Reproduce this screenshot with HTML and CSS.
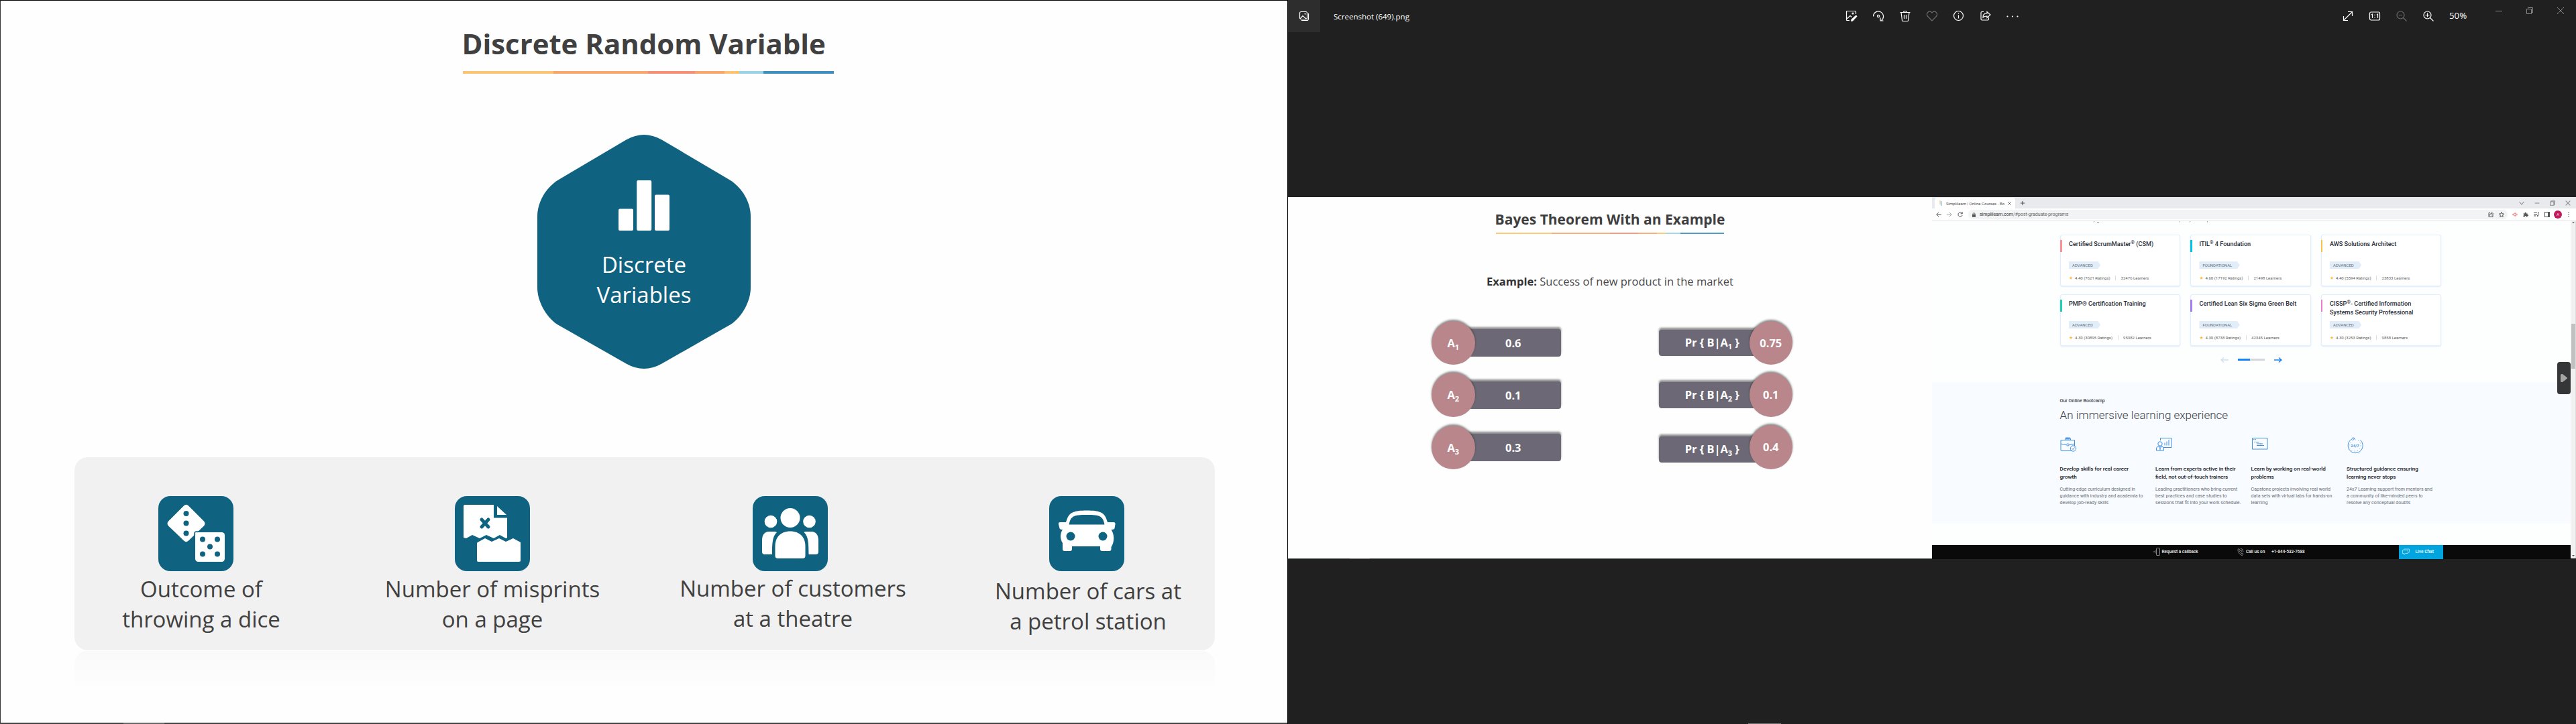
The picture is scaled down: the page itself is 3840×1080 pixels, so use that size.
FILE: index.html
```
<!DOCTYPE html>
<html lang="en">
<head>
<meta charset="utf-8">
<title>Discrete Random Variable</title>
<link rel="stylesheet" href="styles.css">
</head>
<body>
<main class="desktop">
  <section class="slide">
    <header class="slide-head">
      <h1>Discrete Random Variable</h1>
      <div class="rule"></div>
    </header>
    <div class="hex">
      <svg class="hex-shape" viewBox="0 0 318 349" width="318" height="349"><path d="M132.500 7.500Q159-7.500 185.500 7.500L287 67.500C306 79.500 318 101 318 122V228C318 248 306 270.500 289 282.500L185.500 341.500Q159 356.500 132.500 341.500L29 282.500C12 270.500 0 248 0 228V122C0 101 12 79.500 31 67.500Z" fill="#0f6381"/></svg>
      <div class="hex-body">
        <svg viewBox="0 0 76 75" width="76" height="75" fill="#fff"><rect y="42.500" width="22" height="32.500" rx="2"/><rect x="27.200" width="22" height="75" rx="2"/><rect x="54" y="21.500" width="22" height="53.500" rx="2"/></svg>
        <p>Discrete<br>Variables</p>
      </div>
    </div>
    <div class="panel">
      <article class="example example-dice">
        <svg class="tile" viewBox="0 0 112 112">
          <g fill="#fff"><path d="M38 14.500Q41.500 11 45 14.500L68 37.500Q71 41 68 44.500L45 66.500Q41.500 70 38 66.500L15 44.500Q12 41 15 37.500Z"/><rect x="55" y="54" width="44" height="44" rx="4.500"/></g>
          <g fill="#0f6381"><circle cx="41.500" cy="26" r="4"/><circle cx="41.500" cy="40.500" r="4"/><circle cx="41.500" cy="55.500" r="4"/><circle cx="66" cy="64.500" r="4"/><circle cx="88" cy="64.500" r="4"/><circle cx="77" cy="75.500" r="4"/><circle cx="66" cy="86.500" r="4"/><circle cx="88" cy="86.500" r="4"/></g>
          <path d="M54 71V56q0-3 3-3h10" fill="none" stroke="#0f6381" stroke-width="1.600"/>
        </svg>
        <p>Outcome of<br>throwing a dice</p>
      </article>
      <article class="example example-page">
        <svg class="tile" viewBox="0 0 112 112" fill="#fff">
          <path d="M15 13H58V32.500H78V62.500l-2 .5-9-5-9 5-11-5-10 5-11-5-9 5-4-1V15q0-2 2-2Z"/>
          <path d="M63 15 77 28H63Z"/>
          <path d="m34 69 11-6 10 5 11-5 10 5 11-5 11 6V96q0 2-2 2H35q-2 0-2-2V70Z"/>
          <path d="m40 35 10 11M50 35 40 46" stroke="#0f6381" stroke-width="5" stroke-linecap="round"/>
        </svg>
        <p>Number of misprints<br>on a page</p>
      </article>
      <article class="example example-people">
        <svg class="tile" viewBox="0 0 112 112" fill="#fff">
          <circle cx="56" cy="32.500" r="14.500"/><circle cx="27" cy="38" r="9.300"/><circle cx="84.500" cy="38" r="9.300"/>
          <path d="M33.500 89V75C33.500 61 42 52.500 56 52.500S78.500 61 78.500 75V89q0 4-4 4H37.500q-4 0-4-4Z"/>
          <path d="M36 54C30 60 29 68 29 87H18q-4 0-4-4V66C14 58 18 53 24 53h8q3 0 4 1ZM76.500 54C82.500 60 83.500 68 83.500 87H94q4 0 4-4V66C98 58 94 53 88 53h-8q-3 0-3.500 1Z"/>
        </svg>
        <p>Number of customers<br>at a theatre</p>
      </article>
      <article class="example example-car">
        <svg class="tile" viewBox="0 0 112 112">
          <path fill="#fff" d="M25 39C29 25 34 21.500 56 21.500S83 25 87 39h9q3 0 2.500 3l-1 6q-.5 2-5 2c5 8 5 18 0 26V79q0 3-3 3H79q-3 0-3-3V75H34v4q0 3-3 3H23q-3 0-3-3V70c-4-6-4-14 0-20q-4 0-4.500-2l-1.500-6q-.5-3 2-3Z"/>
          <path fill="#0f6381" d="M29.500 42.500C32 30 36 28 56 28s24 2 26.500 14.500Z"/><circle cx="32" cy="60" r="6.500" fill="#0f6381"/><circle cx="80" cy="60" r="6.500" fill="#0f6381"/>
        </svg>
        <p>Number of cars at<br>a petrol station</p>
      </article>
    </div>
    <div class="reflection"></div>
    <div class="progress"><span></span></div>
  </section>

  <section class="viewer">
    <header class="viewer-bar">
      <div class="home"><svg viewBox="0 0 16 16" width="16" height="16"><g fill="none" stroke="#fff" stroke-width="1.200"><rect x="1.500" y="1.500" width="11" height="11" rx="2"/><path d="M14.500 4v8q0 2.500-2.500 2.500H4M2 12l4-4.500 5.500 5"/></g><circle cx="9.500" cy="4.700" r="1" fill="#fff"/></svg></div>
      <span class="filename">Screenshot (649).png</span>
      <nav class="tools">
        <span><svg viewBox="0 0 18 18"><path d="M6 15.500H2.500q-1 0-1-1V2.500q0-1 1-1h12q1 0 1 1V6M2 13l5-4.500 2.500 2"/><circle cx="11" cy="5" r="1"/><path class="solid" d="m16.500 8 1 1.500-6.500 7-3 .5.500-3 6.500-6Z"/></svg></span>
        <span><svg viewBox="0 0 18 18"><path d="M1.500 9.500a7.500 7.500 0 1 1 12 6M16.500 16h-4.500v-4.500"/><circle cx="9" cy="9" r="1.600"/></svg></span>
        <span><svg viewBox="0 0 18 18"><path d="M1.500 3.500h15M6.500 3.500q0-2 2.500-2t2.500 2M3 3.500l1.500 12q.1 1 1 1h7q.9 0 1-1l1.500-12M7.500 7v6M10.500 7v6"/></svg></span>
        <span class="dim"><svg viewBox="0 0 18 18"><path d="m9 16-6.300-6.500C-1 5 5-1 9 4c4-5 10 1 6.300 5.500Z"/></svg></span>
        <span><svg viewBox="0 0 18 18"><circle cx="8.500" cy="8.500" r="7"/><path d="M8.500 7.500v5M8.500 4.500v1.200"/></svg></span>
        <span><svg viewBox="0 0 18 18"><path d="M6 2.500H3.500q-1.500 0-1.500 1.500v9.500q0 1.500 1.500 1.500H12q1.500 0 1.500-1.500V11"/><path d="M5 11c0-4.500 2-6 6-6V2.500l5 4.500-5 4.500V9c-3 0-4.500.5-6 2Z"/></svg></span>
        <span><svg viewBox="0 0 18 18"><g class="solid"><circle cx="1.500" cy="9.500" r="1.100"/><circle cx="9" cy="9.500" r="1.100"/><circle cx="16.500" cy="9.500" r="1.100"/></g></svg></span>
      </nav>
      <nav class="tools tools-zoom">
        <span><svg viewBox="0 0 18 18"><path d="m2.500 15.500 13-13M9 2.500h6.500V9M2.500 9v6.500H9"/></svg></span>
        <span><svg viewBox="0 0 18 18"><rect x="1.500" y="3" width="15" height="12" rx="2"/><path d="M4 7l1.500-1v6M12 7l1.500-1v6M9 6.800v1.200M9 10.300v1.200"/></svg></span>
        <span class="dim"><svg viewBox="0 0 18 18"><circle cx="7.500" cy="7.500" r="5.500"/><path d="m11.500 11.500 5 5M5 7.500h5"/></svg></span>
        <span><svg viewBox="0 0 18 18"><circle cx="7.500" cy="7.500" r="5.500"/><path d="m11.500 11.500 5 5M4.500 7.500h6M7.500 4.500v6"/></svg></span>
      </nav>
      <span class="zoom-level">50%</span>
      <nav class="window-buttons">
        <span><svg viewBox="0 0 10 10"><path d="M0 5.500h10"/></svg></span>
        <span><svg viewBox="0 0 10 10"><path d="M.5 2.500h7v7h-7ZM2.500 2.500v-2h7v7h-2"/></svg></span>
        <span><svg viewBox="0 0 10 10"><path d="m0 0 10 10M10 0 0 10"/></svg></span>
      </nav>
    </header>

    <div class="photo">
      <section class="bayes">
        <h2>Bayes Theorem With an Example</h2>
        <div class="rule"></div>
        <p class="lead"><b>Example:</b> Success of new product in the market</p>
        <div class="pills">
          <div class="col">
            <div class="pill"><span class="disc">A<sub>1</sub></span><span class="bar">0.6</span></div>
            <div class="pill"><span class="disc">A<sub>2</sub></span><span class="bar">0.1</span></div>
            <div class="pill pill-last"><span class="disc">A<sub>3</sub></span><span class="bar">0.3</span></div>
          </div>
          <div class="col col-right">
            <div class="pill"><span class="bar">Pr { B|A<sub>1</sub> }</span><span class="disc">0.75</span></div>
            <div class="pill"><span class="bar">Pr { B|A<sub>2</sub> }</span><span class="disc">0.1</span></div>
            <div class="pill pill-last"><span class="bar">Pr { B|A<sub>3</sub> }</span><span class="disc">0.4</span></div>
          </div>
        </div>
      </section>

      <section class="browser">
        <div class="tabstrip">
          <div class="tab"><svg class="favicon" viewBox="0 0 4 8" width="4" height="8"><path d="M1 0v6" stroke="#f4b860"/><path d="M3 1v7" stroke="#5db4e0"/></svg><span>Simplilearn | Online Courses - Bo</span><svg viewBox="0 0 6 6" width="5" height="5"><path d="m0.500.5 5 5m0-5-5 5" stroke="#444"/></svg></div>
          <svg class="plus" viewBox="0 0 6 6" width="6" height="6"><path d="M3 0v6M0 3h6" stroke="#444"/></svg>
          <div class="chrome-window">
            <svg viewBox="0 0 6 6"><path d="m.5 1.500 2.500 3 2.500-3"/></svg>
            <svg viewBox="0 0 6 6"><path d="M.5 3h5"/></svg>
            <svg viewBox="0 0 6 6"><path d="M.5 1.500h4v4h-4ZM1.500 1.500v-1h4v4h-1"/></svg>
            <svg viewBox="0 0 6 6"><path d="m.5.5 5 5m0-5-5 5"/></svg>
          </div>
        </div>
        <div class="toolbar">
          <span><svg viewBox="0 0 8 8"><path d="M8 4H.8M4 .8.8 4 4 7.200"/></svg></span>
          <span class="faded"><svg viewBox="0 0 8 8"><path d="M0 4h7.200M4 .8 7.200 4 4 7.200"/></svg></span>
          <span><svg viewBox="0 0 8 8"><path d="M7 2.500A3.200 3.200 0 1 0 7.200 5M7.200.3v2.500H4.700"/></svg></span>
          <div class="omnibox">
            <svg viewBox="0 0 6 8" width="5" height="7"><rect y="3" width="6" height="5" fill="#555"/><path d="M1.300 3V2q0-1.500 1.700-1.500T4.700 2v1" fill="none" stroke="#555"/></svg>
            <p>simplilearn.com<i>/#post-graduate-programs</i></p>
            <span><svg viewBox="0 0 8 8"><path d="M3 1.500H1v6h6V5M2.500 5.500c0-2.500 1-3 3-3V1L8 3.200 5.500 5V4"/></svg></span>
            <span><svg viewBox="0 0 8 8"><path d="m4 .5 1 2.300 2.600.3-1.900 1.700.5 2.600L4 6.100 1.800 7.400l.5-2.600L.4 3.100 3 2.800Z"/></svg></span>
          </div>
          <span class="red"><svg viewBox="0 0 8 8"><path d="M2 4q0-2 2-2h1.500v4H4Q2 6 2 4ZM0 4h2M5.500 4H8"/></svg></span>
          <span><svg viewBox="0 0 8 8"><path class="fill" d="M.5 2.500H2.500V2a1.200 1.200 0 0 1 2.400 0v.5H6.500V4H7a1.100 1.100 0 0 1 0 2.200h-.5V7.500H4.700V7a1 1 0 0 0-2 0v.5H.5V5.500H1a.9.9 0 0 0 0-1.800H.5Z"/></svg></span>
          <span><svg viewBox="0 0 8 8"><path d="M0 1h5M0 3.500h5M0 6h3M6.500 1v5M6.500 1H8"/><circle class="fill" cx="5.700" cy="6" r="1"/></svg></span>
          <span><svg viewBox="0 0 8 8"><rect x=".5" y=".5" width="7" height="7"/><path class="fill" d="M5 0h3v8H5Z"/></svg></span>
          <b class="avatar">A</b>
          <span><svg viewBox="0 0 8 8"><g class="fill"><circle cx="4" cy="1" r=".8"/><circle cx="4" cy="4" r=".8"/><circle cx="4" cy="7" r=".8"/></g></svg></span>
        </div>
        <div class="viewport">
          <div class="page">
            <svg class="descenders" viewBox="0 0 952 2" width="952" height="2"><path d="m242 0-1 1.500M246 1.500h3M369.500 0v1.500M385 0l-1 1.500M410.500 0v1.500"/></svg>
            <div class="cards">
              <article class="card red-mark"><h3>Certified ScrumMaster<sup>®</sup> (CSM)</h3><span class="badge">ADVANCED</span><p><i>★</i>4.40 (7621 Ratings)<em>32476 Learners</em></p></article>
              <article class="card cyan-mark"><h3>ITIL<sup>®</sup> 4 Foundation</h3><span class="badge">FOUNDATIONAL</span><p><i>★</i>4.60 (17192 Ratings)<em>21498 Learners</em></p></article>
              <article class="card amber-mark"><h3>AWS Solutions Architect</h3><span class="badge">ADVANCED</span><p><i>★</i>4.40 (5594 Ratings)<em>23833 Learners</em></p></article>
              <article class="card teal-mark"><h3>PMP® Certification Training</h3><span class="badge">ADVANCED</span><p><i>★</i>4.30 (30895 Ratings)<em>95382 Learners</em></p></article>
              <article class="card violet-mark"><h3>Certified Lean Six Sigma Green Belt</h3><span class="badge">FOUNDATIONAL</span><p><i>★</i>4.30 (8738 Ratings)<em>42345 Learners</em></p></article>
              <article class="card pink-mark"><h3>CISSP<sup>®</sup>- Certified Information<br>Systems Security Professional</h3><span class="badge">ADVANCED</span><p><i>★</i>4.30 (3253 Ratings)<em>9858 Learners</em></p></article>
            </div>
            <div class="pager">
              <svg viewBox="0 0 12 10" width="12" height="10"><path d="M12 5H1M5 1.500 1 5l4 3.500" stroke="#cfdff0"/></svg>
              <div class="track"><span></span></div>
              <svg viewBox="0 0 12 10" width="12" height="10"><path d="M0 5h11M7 1.500 11 5 7 8.500" stroke="#1a82f7"/></svg>
            </div>
            <section class="bootcamp">
              <h4>Our Online Bootcamp</h4>
              <h2>An immersive learning experience</h2>
              <div class="features">
                <article>
                  <svg viewBox="0 0 25 25"><path d="M17 20.500H2q-1 0-1-1V4.500h20.500V14M1 10l8.500 1.800M13.500 11.800 21.500 10M7.500 4V2.500q0-1.500 1.500-1.500h5q1.500 0 1.500 1.500V4"/><path d="M8.500 2.500h6" stroke-width="2"/><circle cx="11.500" cy="11.500" r="1.700"/><circle cx="19.500" cy="17" r="4.200"/><path d="m17.500 17 1.500 1.500 2.500-3"/></svg>
                  <h5>Develop skills for real career<br>growth</h5><p>Cutting-edge curriculum designed in<br>guidance with industry and academia to<br>develop job-ready skills</p></article>
                <article>
                  <svg viewBox="0 0 25 25"><path d="M7.500 5V1.500h16.500v14H12M14 12.500v-4M17 12.500v-6M20 12.500V4"/><circle cx="7" cy="10" r="3.200"/><path d="M1.500 20v-3q0-2.500 3-3h5q3 .5 3 3v3ZM5 14l2 3 2-3M7 16v4"/></svg>
                  <h5>Learn from experts active in their<br>field, not out-of-touch trainers</h5><p>Leading practitioners who bring current<br>best practices and case studies to<br>sessions that fit into your work schedule.</p></article>
                <article>
                  <svg viewBox="0 0 25 25"><path d="M1.500 1.500H24v16.500H1.500Z"/><path d="M3 3.700h4" stroke-dasharray="1 .5"/><path d="M5.500 6.500 5 7.500l.500 1M7 7.500h4.500M8 10h7M8 12.500h9M13 10h4M12 12.500h7"/></svg>
                  <h5>Learn by working on real-world<br>problems</h5><p>Capstone projects involving real world<br>data sets with virtual labs for hands-on<br>learning</p></article>
                <article>
                  <svg viewBox="0 0 25 25"><path d="M20.500 4.500a11 11 0 1 1-10-2.500M9 .5l3 1.500-2 2.500"/><circle cx="12.500" cy="12.500" r="8.500" stroke-dasharray=".8 3.650"/><text x="12.500" y="14.600">24/7</text></svg>
                  <h5>Structured guidance ensuring<br>learning never stops</h5><p>24x7 Learning support from mentors and<br>a community of like-minded peers to<br>resolve any conceptual doubts</p></article>
              </div>
            </section>
            <footer class="contact">
              <span class="callback"><svg viewBox="0 0 10 12" width="10" height="12"><rect x="4.500" y=".5" width="5" height="11" rx=".8"/><path d="M2.800 3.500v5M1 5v2"/></svg>Request a callback</span>
              <span class="call"><svg viewBox="0 0 10 12" width="10" height="12"><path d="M1 2.500 2.500 1.500 4.500 4 3.500 5.500 6 8.500 7.500 8l1.500 2-1.500 1.500C4 11 .5 6 1 2.500ZM5 1q3.500.5 4 5M5 3.500q1.500.5 2 2.500"/></svg>Call us on<b>+1-844-532-7688</b></span>
              <span class="chat"><svg viewBox="0 0 11 10" width="11" height="10"><path d="M.5 2.500h8v5H4.500L3 9.500v-2H.5ZM2.500 2.500v-1.500h8v5h-2"/></svg>Live Chat</span>
            </footer>
          </div>
          <div class="scrollbar"><i class="up"></i><span class="thumb"></span><i class="down"></i></div>
          <div class="recorder"><svg viewBox="0 0 10 12" width="10" height="12"><path d="M0 1.500Q0 0 1.500 0H3l7 5.500v1L3 12H1.500Q0 12 0 10.500Z" fill="#a5a5a5"/></svg></div>
        </div>
      </section>
    </div>
    <div class="taskline"><span></span><span></span></div>
    <div class="bottom-edge"><span></span></div>
  </section>
</main>
</body>
</html>
```
FILE: styles.css
```
* { box-sizing: border-box; }
body { margin: 0; background: #202020; overflow: hidden; }
h1, h2, h3, h4, h5, p { margin: 0; font-weight: inherit; }
svg { display: block; flex: none; }
i, em { font-style: normal; }

.desktop { display: flex; width: 3840px; height: 1080px; }

.rule {
  background: linear-gradient(90deg, #fcc470 24.500%, #f8a66c 24.500% 50%, #f78f76 50% 62.500%, #f8a66c 62.500% 70.500%, #fcc470 70.500% 74.500%, #9ad2ea 74.500% 81%, #3d8fc0 81%);
}

/* Left slide */
.slide {
  display: flex; flex-direction: column;
  width: 1920px; height: 1080px;
  background: #fefefe; color: #404040;
  border-top: 1px solid #000; border-left: 1px solid #333; border-right: 1px solid #000;
  font-family: "Open Sans", sans-serif;
}
.slide-head { margin: 39px 0 0 686px; }
.slide-head h1 { padding-left: 1.500px; font-size: 41.900px; line-height: 50px; font-weight: 700; white-space: nowrap; }
.slide-head .rule { width: 553px; height: 4px; margin: 16px 0 0 3px; }

.hex { display: grid; width: 318px; height: 349px; margin: 91px 0 0 800px; }
.hex > * { grid-area: 1 / 1; }
.hex-body { display: flex; flex-direction: column; align-items: center; padding-top: 68px; }
.hex-body p { margin-top: 28px; color: #fff; font-size: 33px; line-height: 45px; text-align: center; }

.panel { display: flex; width: 1700px; height: 288px; margin: 132px 0 0 110px; padding: 58px 0 0 19px; background: #f1f1f1; border-radius: 20px; }
.example { display: flex; flex-direction: column; align-items: center; width: 340px; }
.example p { margin-top: 4px; font-size: 33px; line-height: 45px; text-align: center; white-space: nowrap; }
.tile { width: 112px; height: 112px; background: #0f6381; border-radius: 18px; }
.example-dice .tile { margin-right: 16px; }
.example-page { margin-left: 94px; }
.example-people { margin-left: 108px; }
.example-people .tile { margin-right: 9px; }
.example-people p { margin-top: 3px; }
.example-car { margin-left: 100px; }
.example-car .tile { margin-right: 4px; }
.example-car p { margin-top: 7px; }
.reflection { width: 1700px; height: 60px; margin: 1px 0 0 110px; border-radius: 20px 20px 0 0; background: linear-gradient(#f9f9f9, #fefefe); }
.progress { height: 2px; margin: auto 0 0 -1px; background: #444; padding-left: 184px; }
.progress span { display: block; width: 61px; height: 2px; background: #666; }

/* Photo viewer */
.viewer { display: flex; flex-direction: column; width: 1920px; height: 1080px; background: #202020; }
.viewer-bar { display: flex; height: 48px; color: #fff; font-family: "Open Sans", sans-serif; }
.home { display: flex; align-items: center; justify-content: center; width: 48px; background: #2d2d2d; }
.filename { width: 772px; padding-left: 20px; font-size: 11.500px; line-height: 49px; }
.tools { display: flex; }
.tools span { display: flex; align-items: center; justify-content: center; width: 40px; }
.tools svg { width: 18px; height: 18px; fill: none; stroke: #fff; stroke-width: 1.200; }
.tools .solid { fill: #fff; stroke: none; }
.tools .dim svg { stroke: #6b6b6b; }
.tools-zoom { margin-left: 460px; }
.zoom-level { width: 62px; padding-left: 11px; font-size: 13.300px; line-height: 47px; }
.window-buttons { display: flex; height: 32px; }
.window-buttons span { display: flex; align-items: center; justify-content: center; width: 46px; }
.window-buttons svg { width: 10px; height: 10px; fill: none; stroke: #8a8a8a; stroke-width: 1; }

.photo { display: flex; height: 539px; margin-top: 246px; }

/* Bayes slide */
.bayes { width: 960px; background: #fefefe; color: #3e3e3e; font-family: "Open Sans", sans-serif; }
.bayes h2 { padding-top: 20px; font-size: 21px; line-height: 26px; font-weight: 700; text-align: center; }
.bayes .rule { width: 340px; height: 2px; margin: 7px auto 0; opacity: .9; }
.lead { margin-top: 60px; font-size: 16.500px; line-height: 22px; text-align: center; color: #484848; }
.lead b { color: #333; }
.pills { display: flex; gap: 146px; margin: 47.500px 0 0 214px; color: #fff; font-size: 16.400px; font-weight: 700; }
.pills sub { font-size: 11px; line-height: 0; vertical-align: -4px; }
.col { width: 193px; }
.col-right { width: 199px; }
.pill { display: flex; align-items: center; height: 65.500px; margin-bottom: 12.300px; }
.pill-last { margin-top: 13px; }
.col-right .pill-last { margin-top: 11.300px; }
.disc { position: relative; z-index: 1; width: 64.500px; height: 65.500px; border-radius: 50%; background: #b8868b; box-shadow: 0 -2px 3px rgba(40, 50, 50, .55); line-height: 65px; text-align: center; }
.bar { flex: 1; height: 41px; margin-left: -32px; padding-left: 18px; border-radius: 4px; background: #6d6875; box-shadow: 0 -3px 3px rgba(50, 50, 50, .55); line-height: 41px; text-align: center; }
.col-right .bar { height: 39px; margin: 1px -32px 0 0; padding: 0 8px 0 0; line-height: 38px; }
.col-right .pill-last .bar { margin-top: 8px; }

/* Browser screenshot */
.browser { display: flex; flex-direction: column; width: 960px; background: #fff; font-family: "Roboto", sans-serif; color: #3b3f4a; }
.tabstrip { display: flex; align-items: center; height: 17px; padding: 1px 0 0 4px; background: #e8eaed; }
.tab { display: flex; align-items: center; width: 120px; height: 16px; padding-left: 7px; background: #fff; border-radius: 4px 4px 0 0; font-size: 6.050px; color: #555; }
.tab span { width: 88px; margin: 0 4px 0 6px; white-space: nowrap; }
.plus { margin-left: 8px; }
.chrome-window { display: flex; gap: 15px; margin: -1px 8px 0 auto; }
.chrome-window svg { width: 8px; height: 8px; fill: none; stroke: #8a8a8a; stroke-width: .8; }
.toolbar { display: flex; align-items: center; height: 18px; padding-left: 2px; background: #fff; }
.toolbar span { display: flex; justify-content: center; width: 16px; }
.toolbar span svg { width: 8px; height: 8px; fill: none; stroke: #555; stroke-width: 1; }
.toolbar .fill { fill: #555; stroke: none; }
.toolbar .faded { opacity: .5; }
.toolbar .red svg { stroke: #f0625c; }
.omnibox { display: flex; align-items: center; width: 804px; height: 14px; margin: 0 3px 0 4px; padding: 0 1px 0 6px; border-radius: 7px; background: #f1f3f4; }
.omnibox p { flex: 1; margin-left: 6px; font-size: 7px; color: #333; }
.omnibox i { color: #666; }
.avatar { width: 12px; height: 12px; margin: 0 2px; border-radius: 50%; background: #c2185b; color: #e9a9c2; font-size: 6px; line-height: 12px; text-align: center; }

.viewport { position: relative; display: flex; height: 504px; border-top: 1px solid #dfe1e3; }
.page { width: 952px; background: #fdfefe; }
.descenders { fill: none; stroke: #999; stroke-width: 1; }
.cards { display: grid; grid-template-columns: repeat(3, 179.400px); gap: 12px 15.100px; padding: 17.500px 0 0 191px; }
.card { position: relative; height: 77px; padding: 7px 0 0 12px; border: 1px solid #e1eefb; border-radius: 3px; background: #fff; box-shadow: 0 1px 2px #dcebfa; }
.card::before { content: ""; position: absolute; left: -1px; top: 7px; width: 2.500px; height: 18px; background: var(--mark); }
.red-mark { --mark: #ff8f92; }
.cyan-mark { --mark: #00c3e6; }
.amber-mark { --mark: #f5c342; }
.teal-mark { --mark: #1cd3b4; }
.violet-mark { --mark: #a47df2; }
.pink-mark { --mark: #f07cc8; }
.card h3 { height: 32.500px; font-size: 9.150px; line-height: 13px; font-weight: 500; color: #272c37; white-space: nowrap; }
.card sup { font-size: 7px; line-height: 0; vertical-align: 3px; }
.badge { display: block; width: fit-content; height: 11px; padding: 0 11.500px 0 5px; background: #e1edf9; clip-path: polygon(0 0, calc(100% - 4px) 0, 100% 50%, calc(100% - 4px) 100%, 0 100%); font-size: 6px; line-height: 11px; color: #66707c; }
.card p { display: flex; align-items: center; height: 9px; margin-top: 9px; font-size: 6.020px; color: #5c5c5c; white-space: nowrap; }
.card p i { width: 9px; color: #fbb83c; font: 7px "DejaVu Sans", sans-serif; }
.card em { margin-left: 7.500px; padding-left: 7.500px; border-left: 1px solid #ddd; }
.pager { display: flex; align-items: center; gap: 14px; height: 10px; margin: 16px 0 0 430px; }
.pager path { fill: none; stroke-width: 1.300; }
.track { width: 40px; height: 2.500px; background: #d4d7db; }
.track span { display: block; width: 18px; height: 2.500px; background: #1a82f7; }

.bootcamp { height: 211px; margin-top: 28px; padding: 23px 0 0 190.600px; background: #f8fbff; }
.bootcamp h4 { font-size: 7.050px; line-height: 10px; font-weight: 500; color: #3a3e46; }
.bootcamp h2 { margin-top: 5px; font-size: 17.050px; line-height: 22px; font-weight: 300; color: #3a3f47; }
.features { display: flex; margin-top: 22px; }
.features article { width: 142.500px; white-space: nowrap; }
.features svg { width: 25px; height: 25px; margin-bottom: 16px; fill: none; stroke: #3f8fe0; stroke-width: 1; }
.features text { fill: #3f8fe0; stroke: none; font-size: 6px; font-weight: 700; text-anchor: middle; }
.features h5 { font-size: 8.100px; line-height: 12px; font-weight: 500; color: #15181d; }
.features p { margin-top: 8px; font-size: 7.020px; line-height: 10px; color: #666d75; }

.contact { display: flex; align-items: center; height: 21px; margin-top: 32px; padding-left: 330px; background: #0a0a0a; color: #f0f0f0; font-size: 6.450px; font-weight: 500; }
.contact svg { fill: none; stroke: #bbb; stroke-width: .7; }
.contact span { display: flex; align-items: center; white-space: nowrap; }
.callback { width: 125px; gap: 2.500px; }
.call { width: 241px; gap: 3px; }
.call b { margin-left: 7px; font-size: 6.300px; font-weight: 500; }
.contact .chat { width: 66px; height: 21px; gap: 8.500px; padding-left: 5px; background: #00a5e0; color: #f4fbff; font-size: 6.600px; }
.contact .chat svg { stroke: #c8ecfa; }

.scrollbar { display: flex; flex-direction: column; align-items: center; width: 8px; height: 503px; background: #f1f1f1; border-right: 1px solid #ddd; }
.scrollbar i { border: 2px solid transparent; }
.scrollbar .up { margin-top: 1px; border-top: 0; border-bottom: 2.500px solid #555; }
.scrollbar .down { margin: auto 0 3px; border-bottom: 0; border-top: 2.500px solid #555; }
.thumb { width: 6px; height: 67px; margin-top: 150px; background: #c1c1c1; }
.recorder { position: absolute; right: 8px; top: 210px; display: flex; align-items: center; justify-content: center; width: 20px; height: 48px; border-radius: 4px; background: #353637; }

.taskline { display: flex; height: 1px; background: linear-gradient(90deg, #444c4a 50%, #1e1e1e 50%); }
.taskline span { width: 30px; margin-left: 92px; background: #666; }
.taskline span + span { width: 24px; margin-left: 1180px; }
.bottom-edge { margin-top: auto; padding-left: 686px; }
.bottom-edge span { display: block; width: 49px; height: 1px; background: #777; }
```
